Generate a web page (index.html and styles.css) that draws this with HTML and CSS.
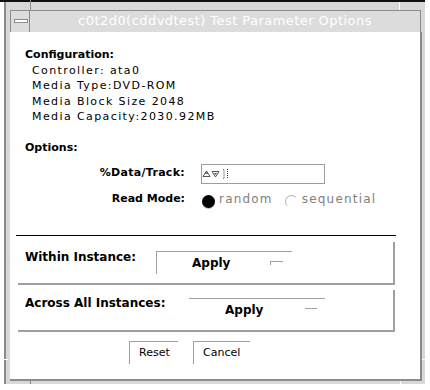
FILE: index.html
```html
<!DOCTYPE html>
<html>
<head>
<meta charset="utf-8">
<link rel="stylesheet" href="styles.css">
</head>
<body>
<div class="topline"></div>
<div class="frame">
  <span class="tick tick-tl"></span>
  <span class="tick tick-tr"></span>
  <span class="tick tick-lb"></span>
  <span class="tick tick-rb"></span>
  <span class="tick tick-bl"></span>
  <span class="tick tick-br"></span>
  <div class="titlebar">
    <div class="menucell"><span class="menubar"></span></div>
    <div class="title">c0t2d0(cddvdtest) Test Parameter Options</div>
  </div>
  <div class="content">
    <div class="section-head">Configuration:</div>
    <div class="config">
      <div class="cfg">Controller: ata0</div>
      <div class="cfg">Media Type:DVD-ROM</div>
      <div class="cfg">Media Block Size 2048</div>
      <div class="cfg">Media Capacity:2030.92MB</div>
    </div>
    <div class="section-head options-head">Options:</div>
    <div class="row data-row">
      <div class="label">%Data/Track:</div>
      <div class="textbox">
        <svg class="spin" width="34" height="18" viewBox="0 0 34 18">
          <path d="M4.5 6 L8 11.5 L1 11.5 Z" fill="#fff" stroke="#555" stroke-width="1"/>
          <path d="M3 9 L6 9 L4.5 7 Z" fill="#555"/>
          <path d="M10 6.5 L17 6.5 L13.5 12 Z" fill="#fff" stroke="#555" stroke-width="1"/>
          <path d="M12 8 L15 8 L13.5 10 Z" fill="#555"/>
          <path d="M21 4 L22 5 L22 13 L21 14" fill="none" stroke="#333" stroke-width="1" stroke-dasharray="1 1"/>
          <path d="M25.5 4 L25.5 14" fill="none" stroke="#333" stroke-width="1" stroke-dasharray="1 1"/>
        </svg>
      </div>
    </div>
    <div class="row mode-row">
      <div class="label">Read Mode:</div>
      <span class="radio on"></span>
      <span class="choice">random</span>
      <span class="radio off"></span>
      <span class="choice">sequential</span>
    </div>
    <div class="separator"></div>
    <div class="group group1">
      <div class="glabel gl1">Within Instance:</div>
      <div class="optbtn ob1"><span>Apply</span><span class="ind ind1"></span></div>
    </div>
    <div class="group group2">
      <div class="glabel gl2">Across All Instances:</div>
      <div class="optbtn ob2"><span>Apply</span><span class="ind ind2"></span></div>
    </div>
    <div class="actions">
      <div class="btn reset">Reset</div>
      <div class="btn cancel">Cancel</div>
    </div>
  </div>
</div>
</body>
</html>
```

FILE: styles.css
```css
html, body {
  margin: 0;
  padding: 0;
  background: #ffffff;
}
body {
  width: 430px;
  height: 390px;
  overflow: hidden;
  font-family: "DejaVu Sans", "Liberation Sans", sans-serif;
  color: #000;
}
.topline {
  width: 425px;
  height: 2px;
  background: #111;
}
.frame {
  position: relative;
  box-sizing: border-box;
  margin-left: 4px;
  width: 421px;
  height: 382px;
  background: #d8d8d8;
  border-left: 2px solid #8c8c8c;
  padding: 8px 0 3px 4px;
  display: flex;
  flex-direction: column;
}
.tick {
  position: absolute;
  background: #8c8c8c;
}
.tick-tl { left: 24px; top: -2px; width: 1px; height: 10px; }
.tick-tr { left: 393px; top: 0; width: 1px; height: 8px; background: #fff; }
.tick-lb { left: -2px; top: 357px; width: 4px; height: 1px; background: #fff; }
.tick-rb { left: 416px; top: 357px; width: 4px; height: 1px; background: #fff; }
.tick-bl { left: 24px; top: 379px; width: 1px; height: 3px; }
.tick-br { left: 394px; top: 379px; width: 1px; height: 3px; background: #fff; }

.titlebar {
  box-sizing: border-box;
  width: 411px;
  height: 22px;
  background: #dcdcdc;
  border-top: 1px solid #8c8c8c;
  border-left: 1px solid #8c8c8c;
  border-right: 1px solid #8c8c8c;
  display: flex;
}
.menucell {
  width: 19px;
  border-right: 1px solid #8c8c8c;
  display: flex;
  align-items: flex-start;
  padding-top: 8px;
  box-sizing: border-box;
  padding-left: 3px;
}
.menubar {
  display: block;
  box-sizing: border-box;
  width: 14px;
  height: 4px;
  border: 1px solid #8c8c8c;
  background: #fff;
}
.title {
  flex: 1;
  text-align: center;
  color: #fff;
  font-size: 13px;
  line-height: 20px;
  letter-spacing: 0.45px;
}
.content {
  box-sizing: border-box;
  width: 412px;
  height: 349px;
  background: #fff;
  border-right: 2px solid #8c8c8c;
  border-bottom: 2px solid #8c8c8c;
  padding: 15px 0 0 15px;
}
.section-head {
  font-weight: bold;
  font-size: 11px;
  line-height: 15.5px;
}
.config {
  padding-left: 7px;
}
.cfg {
  font-size: 11px;
  line-height: 15.5px;
  letter-spacing: 1.4px;
}
.options-head {
  margin-top: 15px;
}
.row {
  display: flex;
  align-items: flex-start;
}
.label {
  width: 160px;
  text-align: right;
  font-weight: bold;
  font-size: 11px;
  line-height: 15.5px;
  flex: none;
}
.data-row {
  margin-top: 9px;
  margin-left: 0;
}
.data-row .label {
  margin-top: 0.5px;
  letter-spacing: 0.3px;
}
.textbox {
  box-sizing: border-box;
  margin-left: 16px;
  width: 124px;
  height: 20px;
  border: 1px solid #9c9c9c;
  display: flex;
  align-items: center;
}
.spin {
  display: block;
}
.mode-row {
  margin-top: 7px;
}
.radio {
  box-sizing: border-box;
  flex: none;
  width: 13px;
  height: 13px;
  border-radius: 50%;
  margin-top: 4px;
}
.radio.on {
  margin-left: 17px;
  background: #000;
  box-shadow: 0 1px 0 0 #bbb;
}
.radio.off {
  margin-left: 12px;
  border: 1px solid transparent;
  border-top-color: #b4b4b4;
  border-left-color: #b4b4b4;
}
.choice {
  font-size: 12px;
  line-height: 15.5px;
  letter-spacing: 1.2px;
  color: #808080;
  margin-left: 4px;
  margin-top: 1px;
}
.separator {
  margin-top: 27px;
  margin-left: -9px;
  width: 380px;
  height: 1px;
  background: #000;
}
.group {
  box-sizing: border-box;
  margin-left: -7px;
  width: 377px;
  border-right: 2px solid #a0a0a0;
  border-bottom: 2px solid #a0a0a0;
  display: flex;
  align-items: flex-start;
  padding-left: 7px;
}
.group1 {
  margin-top: 6px;
  height: 43px;
  padding-top: 8px;
}
.group2 {
  margin-top: 5px;
  height: 42px;
  padding-top: 6px;
}
.glabel {
  font-weight: bold;
  font-size: 12px;
  line-height: 15px;
  flex: none;
}
.gl1 { width: 131px; }
.gl2 { width: 164px; }
.optbtn {
  box-sizing: border-box;
  width: 136px;
  height: 23px;
  display: flex;
  align-items: flex-start;
  font-weight: bold;
  font-size: 12px;
  line-height: 22px;
  padding-left: 36px;
  border-top: 1px solid #a0a0a0;
}
.ob1 {
  margin-top: 1px;
  border-left: 1px solid #a0a0a0;
  padding-left: 35px;
}
.ob2 {
  margin-top: 2px;
}
.ind {
  box-sizing: border-box;
  margin-left: auto;
  border-top: 1px solid #a0a0a0;
}
.ind1 {
  width: 13px;
  height: 4px;
  margin-top: 9px;
  margin-right: 9px;
  border-left: 1px solid #a0a0a0;
}
.ind2 {
  width: 12px;
  height: 1px;
  margin-top: 9px;
  margin-right: 8px;
}
.actions {
  display: flex;
  margin-top: 9px;
  margin-left: 104px;
  gap: 15px;
}
.btn {
  box-sizing: border-box;
  height: 23px;
  font-size: 11px;
  line-height: 22px;
  padding-left: 9px;
  border-top: 1px solid #a0a0a0;
  border-left: 1px solid #a0a0a0;
}
.reset { width: 49px; }
.cancel { width: 57px; }
```
